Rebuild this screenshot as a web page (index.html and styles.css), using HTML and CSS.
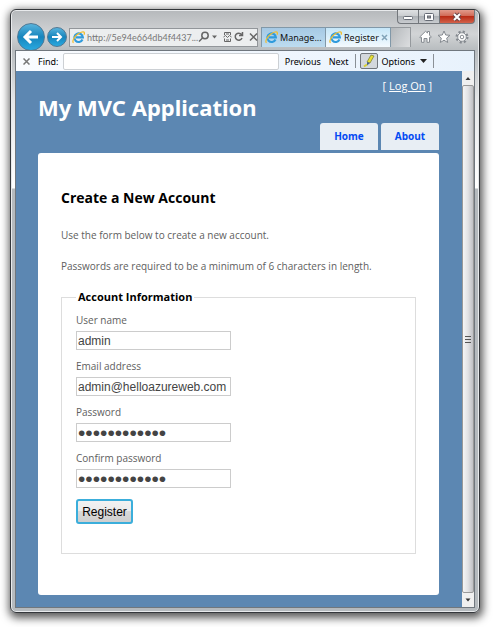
FILE: index.html
```html
<!DOCTYPE html>
<html lang="en">
<head>
<meta charset="utf-8">
<title>Register</title>
<link rel="stylesheet" href="styles.css">
</head>
<body>
<svg class="defs" aria-hidden="true">
  <symbol id="ie" viewBox="0 0 14 14">
    <path d="M11.3 9.2A4.6 4.6 0 1 1 11.7 6.8H4.2" fill="none" stroke="#2f9bdc" stroke-width="2.3"/>
    <path d="M1.6 12.8C-.2 11.4 2 6.6 6 3.6 9.400 1 12.800.2 13.300 1.700c.2.7 0 1.500-.4 2.300" fill="none" stroke="#f2bd2b" stroke-width="1.300"/>
  </symbol>
</svg>
<div class="window">
  <div class="controls">
    <button class="control" aria-label="Minimize"><svg width="12" height="10" viewBox="0 0 12 10"><rect x="1.500" y="4.500" width="9" height="3" rx="1" fill="#fff" stroke="#666b75"/></svg></button>
    <button class="control" aria-label="Maximize"><svg width="12" height="10" viewBox="0 0 12 10"><rect x="1.500" y="1.500" width="9" height="7" rx="1" fill="#fff" stroke="#666b75"/><rect x="4.500" y="4" width="3" height="2" fill="#999" stroke="#666b75"/></svg></button>
    <button class="control control-close" aria-label="Close"><svg width="12" height="10" viewBox="0 0 12 10"><path d="M3 2l6 6M9 2L3 8" stroke="#6b4548" stroke-width="4"/><path d="M3 2l6 6M9 2L3 8" stroke="#fff" stroke-width="2"/></svg></button>
  </div>
  <div class="nav">
    <button class="round back" aria-label="Back"><svg width="18" height="16" viewBox="0 0 18 16"><path d="M9 2L3 8l6 6M3.500 8H16" fill="none" stroke="#fff" stroke-width="3"/></svg></button>
    <button class="round forward" aria-label="Forward"><svg width="12" height="10" viewBox="0 0 12 10"><path d="M6 1l4 4-4 4M1 5h9" fill="none" stroke="#fff" stroke-width="2"/></svg></button>
    <div class="address">
      <svg class="ie" aria-hidden="true"><use href="#ie"/></svg>
      <a class="url" href="#">http://5e94e664db4f4437...</a>
      <svg class="tools" width="60" height="12" viewBox="0 0 60 12" fill="none" stroke="#666" stroke-width="1.500" aria-hidden="true">
        <circle cx="7" cy="4.500" r="3.200"/><path d="M4.500 7L1 10.500"/>
        <path d="M14 4.500h5l-2.500 3z" fill="#666" stroke="none"/>
        <path d="M26.500 4V1.500h6V4M26.500 7.500v3h6v-3M25.500 6l2-1.500 2 2 2-2 2 1.500M28 3h3M28 9h3" stroke-width="1"/>
        <path d="M43.500 3.500A3.500 3.500 0 1 0 44 7M44.500 1v3.500H41"/>
        <path d="M52 2.500l7 7M59 2.500l-7 7"/>
      </svg>
    </div>
    <a class="tab" href="#"><svg class="ie" aria-hidden="true"><use href="#ie"/></svg>Manage...</a>
    <a class="tab tab-active" href="#"><svg class="ie" aria-hidden="true"><use href="#ie"/></svg>Register<svg class="tab-close" width="7" height="7" viewBox="0 0 7 7"><path d="M1 1l5 5M6 1L1 6" stroke="#81a3b8" stroke-width="1.500"/></svg></a>
    <button class="new-tab" aria-label="New tab"></button>
    <svg class="commands" width="50" height="14" viewBox="0 0 50 14" fill="#fff" stroke="#858a90" stroke-width="1" aria-hidden="true">
      <path d="M.7 7L6.500 1.300 8.500 3V1.500h2v3.600L12.300 7l-1 1-.8-.7v5H8V8.500H5v3.800H2.500v-5l-.8.700z"/>
      <path d="M25 1l1.700 4 4.300.3-3.300 2.800 1 4.400L25 10.200l-3.700 2.300 1-4.400L19 5.300l4.300-.3z"/>
      <circle cx="43" cy="7" r="5" stroke-width="3" stroke-dasharray="2 1.930"/>
      <circle cx="43" cy="7" r="4.300"/><circle cx="43" cy="7" r="1.800"/>
    </svg>
  </div>
  <div class="client">
    <form class="find">
      <button class="find-close" type="button" aria-label="Close find bar"><svg width="7" height="7" viewBox="0 0 7 7"><path d="M.5.5l6 6M6.500.5l-6 6" stroke="#777" stroke-width="1.500"/></svg></button>
      <label for="find">Find:</label>
      <input class="find-input" id="find" type="text">
      <button class="find-button" type="button">Previous</button>
      <button class="find-button" type="button">Next</button>
      <span class="divider"></span>
      <button class="highlight" type="button" aria-label="Highlight matches"><svg width="12" height="14" viewBox="0 0 12 14"><path d="M8 1l3 1-4 7-3-1z" fill="#e8df34" stroke="#777b30" stroke-width=".7"/><path d="M4 8l3 1-3 2.500z" fill="#4b6586"/><path d="M1 12.500l3-2" stroke="#d6d02f" stroke-width="2"/></svg></button>
      <button class="find-button options" type="button">Options<svg width="7" height="4" viewBox="0 0 7 4"><path d="M0 0h7L3.500 4z" fill="#222"/></svg></button>
      <span class="divider"></span>
    </form>
    <div class="viewport">
      <div class="page">
        <p class="login">[ <a href="#">Log On</a> ]</p>
        <h1>My MVC Application</h1>
        <nav class="menu"><a href="#">Home</a><a href="#">About</a></nav>
        <main>
          <h2>Create a New Account</h2>
          <p>Use the form below to create a new account.</p>
          <p>Passwords are required to be a minimum of 6 characters in length.</p>
          <form>
            <fieldset>
              <legend>Account Information</legend>
              <label for="user">User name</label>
              <input id="user" type="text" value="admin">
              <label for="email">Email address</label>
              <input id="email" type="text" value="admin@helloazureweb.com">
              <label for="password">Password</label>
              <input id="password" type="password" value="abcdefghijkl">
              <label for="confirm">Confirm password</label>
              <input id="confirm" type="password" value="abcdefghijkl">
              <button class="register" type="button">Register</button>
            </fieldset>
          </form>
        </main>
      </div>
      <div class="scrollbar" aria-hidden="true">
        <svg class="arrow" viewBox="0 0 12 14"><path d="M3.500 9h5L6 6z" fill="#333"/></svg>
        <div class="thumb"><svg width="6" height="7" viewBox="0 0 6 7"><path d="M0 .5h6M0 3.500h6M0 6.500h6" stroke="#555"/></svg></div>
        <svg class="arrow" viewBox="0 0 12 14"><path d="M3.500 5.500h5L6 8.500z" fill="#333"/></svg>
      </div>
    </div>
  </div>
</div>
</body>
</html>
```
FILE: styles.css
```css
* { box-sizing: border-box; }
body {
  margin: 0;
  min-height: 100vh;
  padding: 9px 13px 14px 10px;
  display: flex;
  background: #fff;
  font-family: "Trebuchet MS", "Open Sans", sans-serif;
  font-size: 10px;
}
button { font: inherit; padding: 0; border: 0; background: none; color: inherit; }
svg { flex: none; }
.defs { position: absolute; width: 0; height: 0; }
.window {
  flex: 1;
  min-width: 0;
  display: flex;
  flex-direction: column;
  padding: 0 4px 4px;
  border: 1px solid #34373b;
  border-radius: 6px;
  background: linear-gradient(#b5b8bb, #d2d4d6 24px, #b8bcbf 40px, #e4e6e8 90px, #fff 178px, #b5babe 179px, #b5babe);
  box-shadow: inset 0 0 0 1px #e8eaec, 1px 3px 9px 2px rgba(0, 0, 0, .65);
}
.controls { display: flex; justify-content: flex-end; height: 14px; }
.control {
  display: flex;
  align-items: center;
  justify-content: center;
  width: 21px;
  border: 1px solid #73777c;
  border-top: 0;
  border-right: 0;
  background: linear-gradient(#dfe1e3, #c8cbce 50%, #aeb2b6 50%, #c9ccd0);
}
.control:first-child { border-bottom-left-radius: 4px; }
.control-close {
  width: 36px;
  border-right: 1px solid #73777c;
  border-bottom-right-radius: 4px;
  background: linear-gradient(#e29b8c, #cf6551 50%, #b92c16 50%, #d3624b);
}
.nav { display: flex; align-items: center; height: 26px; padding-left: 2px; font-family: "Noto Sans", sans-serif; font-size: 9px; }
.round {
  display: flex;
  align-items: center;
  justify-content: center;
  flex: none;
  border: 1px solid #4f7894;
  border-radius: 50%;
  background: linear-gradient(#58b3dc, #1685bd 50%, #2aa9e0);
}
.back { width: 28px; height: 28px; }
.forward { width: 20px; height: 20px; margin: 0 2px; }
.address {
  display: flex;
  align-items: center;
  flex: 1;
  min-width: 0;
  height: 19px;
  padding: 0 3px 0 2px;
  border: 1px solid #92969a;
  background: #eceeef;
}
.ie { width: 13px; height: 13px; margin-right: 2px; }
.url { flex: 1; color: #777; font-family: Lato, sans-serif; text-decoration: none; white-space: nowrap; }
.tab {
  display: flex;
  align-items: center;
  flex: none;
  width: 65px;
  height: 20px;
  margin-left: 3px;
  padding-left: 3px;
  border: 1px solid #8198a8;
  border-bottom: 0;
  background: linear-gradient(#a6c9e4, #bddcf0);
  color: #111;
  text-decoration: none;
  white-space: nowrap;
}
.tab-active { margin-left: 0; border-left: 0; background: linear-gradient(#c5e6f8, #f4fafe); }
.tab-close { margin-left: 2px; }
.new-tab { flex: none; width: 20px; height: 20px; border: 1px solid #95999d; border-left: 0; border-bottom: 0; background: linear-gradient(120deg, #b4b8bb, #dcdee0); }
.commands { margin: 0 6px 0 8px; }
.client { flex: 1; display: flex; flex-direction: column; border: 1px solid #70777e; }
.find {
  display: flex;
  align-items: center;
  height: 20px;
  padding-left: 7px;
  background: linear-gradient(90deg, #fafcff, #e8f2fc);
  font-family: "Noto Sans", sans-serif;
  font-size: 9px;
}
.find-close { display: flex; margin-right: 8px; }
.find-input { flex: 1; min-width: 0; height: 17px; margin: 0 6px 0 4px; border: 1px solid #ccd0d4; border-radius: 2px; background: #fff; }
.find-button { margin-right: 8px; }
.divider { width: 1px; height: 14px; margin-left: -2px; background: #8a9096; }
.highlight { display: flex; align-items: center; justify-content: center; width: 18px; height: 16px; margin: 0 4px; border: 1px solid #71777d; border-radius: 2px; background: #d3d8dd; }
.options { display: flex; align-items: center; gap: 5px; }
.find .divider:last-child { margin: 0 40px 0 -2px; }
.viewport { flex: 1; display: flex; }
.page { flex: 1; min-width: 0; padding: 7px 23px 11px 22px; background: #5c87b2; color: #606060; }
.login { margin: 0 7px 0 0; color: #fff; text-align: right; line-height: 16px; font-size: 11px; }
.login a { color: #fff; }
h1 { margin: -2px 0 1px; color: #fff; font-family: "Trebuchet MS", "Noto Sans", sans-serif; font-size: 22px; line-height: 30px; white-space: nowrap; }
.menu { display: flex; justify-content: flex-end; gap: 3px; margin-bottom: 3px; }
.menu a {
  width: 58px;
  border-radius: 3px 3px 0 0;
  background: #e8eef4;
  color: #034af3;
  font-weight: 700;
  line-height: 27px;
  text-align: center;
  text-decoration: none;
}
main { padding: 34px 23px 41px; border-radius: 3px; background: #fff; }
h2 { margin: 0 0 18px; color: #000; font-size: 14px; line-height: 22px; }
main p { margin: 0 0 15px; line-height: 16px; }
fieldset { min-width: 0; margin: 0; padding: 8px 14px 29px; border: 1px solid #ddd; }
legend { padding: 0 2px; color: #000; font-size: 11px; font-weight: 700; line-height: 16px; }
fieldset label { display: block; line-height: 14px; }
fieldset input {
  display: block;
  width: 155px;
  height: 19px;
  margin: 4px 0 9px;
  padding: 1px;
  border: 1px solid #ccc;
  color: #444;
  font: 12px "Liberation Sans", Arial, sans-serif;
}
fieldset input[type="password"] { font-size: 21px; }
.register {
  width: 57px;
  height: 25px;
  margin-top: 2px;
  border: 2px solid #3baedb;
  border-radius: 3px;
  background: linear-gradient(#f2f2f2, #ebebeb 50%, #d9d9d9 50%, #cfcfcf);
  color: #000;
  font: 12px "Liberation Sans", Arial, sans-serif;
}
.scrollbar { display: flex; flex-direction: column; width: 12px; background: #f0f0f0; }
.arrow { width: 12px; height: 14px; }
.thumb { flex: 1; display: flex; align-items: center; justify-content: center; border: 1px solid #999; border-radius: 2px; background: linear-gradient(90deg, #f5f5f5, #e2e2e4 50%, #bfc0c4); }
```
